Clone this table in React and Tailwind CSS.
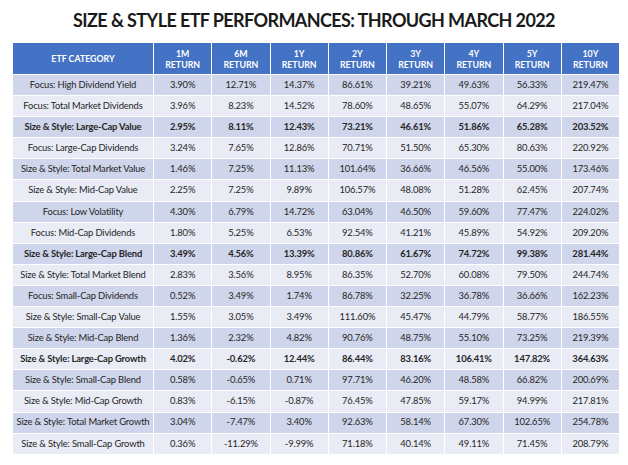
const columns = ['1M', '6M', '1Y', '2Y', '3Y', '4Y', '5Y', '10Y'];

const rows = [
    { name: 'Focus: High Dividend Yield', values: ['3.90%', '12.71%', '14.37%', '86.61%', '39.21%', '49.63%', '56.33%', '219.47%'] },
    { name: 'Focus: Total Market Dividends', values: ['3.96%', '8.23%', '14.52%', '78.60%', '48.65%', '55.07%', '64.29%', '217.04%'] },
    { name: 'Size & Style: Large-Cap Value', bold: true, values: ['2.95%', '8.11%', '12.43%', '73.21%', '46.61%', '51.86%', '65.28%', '203.52%'] },
    { name: 'Focus: Large-Cap Dividends', values: ['3.24%', '7.65%', '12.86%', '70.71%', '51.50%', '65.30%', '80.63%', '220.92%'] },
    { name: 'Size & Style: Total Market Value', values: ['1.46%', '7.25%', '11.13%', '101.64%', '36.66%', '46.56%', '55.00%', '173.46%'] },
    { name: 'Size & Style: Mid-Cap Value', values: ['2.25%', '7.25%', '9.89%', '106.57%', '48.08%', '51.28%', '62.45%', '207.74%'] },
    { name: 'Focus: Low Volatility', values: ['4.30%', '6.79%', '14.72%', '63.04%', '46.50%', '59.60%', '77.47%', '224.02%'] },
    { name: 'Focus: Mid-Cap Dividends', values: ['1.80%', '5.25%', '6.53%', '92.54%', '41.21%', '45.89%', '54.92%', '209.20%'] },
    { name: 'Size & Style: Large-Cap Blend', bold: true, values: ['3.49%', '4.56%', '13.39%', '80.86%', '61.67%', '74.72%', '99.38%', '281.44%'] },
    { name: 'Size & Style: Total Market Blend', values: ['2.83%', '3.56%', '8.95%', '86.35%', '52.70%', '60.08%', '79.50%', '244.74%'] },
    { name: 'Focus: Small-Cap Dividends', values: ['0.52%', '3.49%', '1.74%', '86.78%', '32.25%', '36.78%', '36.66%', '162.23%'] },
    { name: 'Size & Style: Small-Cap Value', values: ['1.55%', '3.05%', '3.49%', '111.60%', '45.47%', '44.79%', '58.77%', '186.55%'] },
    { name: 'Size & Style: Mid-Cap Blend', values: ['1.36%', '2.32%', '4.82%', '90.76%', '48.75%', '55.10%', '73.25%', '219.39%'] },
    { name: 'Size & Style: Large-Cap Growth', bold: true, values: ['4.02%', '-0.62%', '12.44%', '86.44%', '83.16%', '106.41%', '147.82%', '364.63%'] },
    { name: 'Size & Style: Small-Cap Blend', values: ['0.58%', '-0.65%', '0.71%', '97.71%', '46.20%', '48.58%', '66.82%', '200.69%'] },
    { name: 'Size & Style: Mid-Cap Growth', values: ['0.83%', '-6.15%', '-0.87%', '76.45%', '47.85%', '59.17%', '94.99%', '217.81%'] },
    { name: 'Size & Style: Total Market Growth', values: ['3.04%', '-7.47%', '3.40%', '92.63%', '58.14%', '67.30%', '102.65%', '254.78%'] },
    { name: 'Size & Style: Small-Cap Growth', values: ['0.36%', '-11.29%', '-9.99%', '71.18%', '40.14%', '49.11%', '71.45%', '208.79%'] },
];

const App = () => {
    return (
        <div className="w-[628px] h-[465px] bg-white font-['Lato',sans-serif] text-[#262626] overflow-hidden">
            <h1 className="h-[43px] pt-[9px] text-center text-[18px] font-bold leading-[22px] tracking-[-0.6px] text-[#1a1a1a]">
                SIZE &amp; STYLE ETF PERFORMANCES: THROUGH MARCH 2022
            </h1>

            <div className="ml-[13px] w-[606px] grid grid-cols-[140px_repeat(8,1fr)] gap-x-px gap-y-px bg-white">
                {/* Header */}
                <div className="h-[31px] bg-[#4472c4] text-white text-[8.8px] font-bold flex items-center justify-center">
                    ETF CATEGORY
                </div>
                {columns.map((col) => (
                    <div key={col} className="h-[31px] bg-[#4472c4] text-white text-[8.8px] font-bold leading-[11px] flex flex-col items-center justify-center">
                        <span>{col}</span>
                        <span>RETURN</span>
                    </div>
                ))}

                {/* Body */}
                {rows.map((row, i) => {
                    const band = i % 2 === 0 ? 'bg-[#cfd5ea]' : 'bg-[#e9ebf5]';
                    const weight = row.bold ? 'font-bold' : 'font-normal';
                    return [
                        <div key={`${row.name}-n`} className={`h-[20.1px] ${band} ${weight} text-[9.4px] tracking-[-0.15px] flex items-center justify-center whitespace-nowrap`}>
                            {row.name}
                        </div>,
                        ...row.values.map((v, j) => (
                            <div key={`${row.name}-${j}`} className={`h-[20.1px] ${band} ${weight} text-[9.4px] tracking-[-0.15px] flex items-center justify-center`}>
                                {v}
                            </div>
                        )),
                    ];
                })}
            </div>
        </div>
    );
};

export default App;
